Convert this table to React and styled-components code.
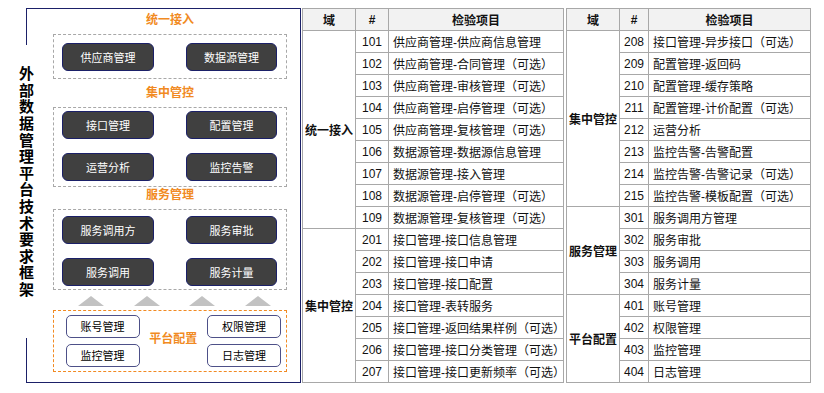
import React from "react";
import styled, { createGlobalStyle } from "styled-components";

const NAVY = "#1b2068";
const ORANGE = "#f18a22";

const GlobalStyle = createGlobalStyle`
  body {
    margin: 0;
    background: #fff;
    font-family: "Liberation Sans", "Noto Sans CJK SC", sans-serif;
    color: #111;
  }
`;

const Page = styled.div`
  display: flex;
  align-items: flex-start;
  padding: 8px 0 0 18px;
`;

const Diagram = styled.div`
  display: flex;
  width: 283px;
  height: 375px;
  flex-shrink: 0;
`;

const Rail = styled.div`
  width: 16px;
  display: flex;
  flex-direction: column;
`;

const RailTop = styled.div`
  margin-left: 8px;
  height: 36px;
  border-left: 1.5px solid ${NAVY};
  border-top: 1.5px solid ${NAVY};
`;

const RailBottom = styled.div`
  margin-top: auto;
  margin-left: 8px;
  height: 44px;
  border-left: 1.5px solid ${NAVY};
  border-bottom: 1.5px solid ${NAVY};
`;

const RailText = styled.div`
  margin-top: 21px;
  writing-mode: vertical-rl;
  font-family: "Noto Sans CJK SC", sans-serif;
  font-size: 15px;
  font-weight: 700;
  line-height: 16px;
  letter-spacing: 1.6px;
  color: #000;
`;

const Board = styled.div`
  flex: 1;
  display: flex;
  flex-direction: column;
  border: 1.5px solid ${NAVY};
  border-left: none;
  padding: 0 13px 0 19px;
`;

const SectionTitle = styled.div`
  text-align: center;
  color: ${ORANGE};
  font-family: "Noto Sans CJK SC", sans-serif;
  font-size: 12px;
  font-weight: 700;
  line-height: 16px;
  margin: ${(p) => p.$top || 0}px 0 7px;
`;

const DashBox = styled.div`
  border: 1px dashed #a8a8a8;
  display: grid;
  grid-template-columns: 92px 91px;
  justify-content: space-between;
  row-gap: 14px;
  padding: ${(p) => p.$pad};
`;

const DarkButton = styled.div`
  height: 28px;
  box-sizing: border-box;
  display: flex;
  align-items: center;
  justify-content: center;
  background: #404040;
  border: 1.5px solid ${NAVY};
  border-radius: 6px;
  color: #fff;
  font-family: "Noto Sans CJK SC", sans-serif;
  font-size: 11px;
`;

const Arrows = styled.div`
  display: flex;
  justify-content: space-between;
  padding: 0 16px 0 25px;
  margin-top: 6px;
`;

const Arrow = styled.div`
  width: 0;
  height: 0;
  border-left: 13.5px solid transparent;
  border-right: 13.5px solid transparent;
  border-bottom: 10px solid #c2c2c2;
`;

const ConfigBox = styled.div`
  margin-top: 4px;
  border: 1.5px dashed ${ORANGE};
  display: grid;
  grid-template-columns: 74px 1fr 74px;
  grid-template-rows: 23px 23px;
  row-gap: 6px;
  padding: 3.5px 5px 4px 11.5px;
`;

const ConfigTitle = styled.div`
  grid-column: 2;
  grid-row: 1 / span 2;
  align-self: center;
  text-align: center;
  margin-top: -6px;
  color: ${ORANGE};
  font-family: "Noto Sans CJK SC", sans-serif;
  font-size: 12px;
  font-weight: 700;
`;

const LightButton = styled.div`
  grid-column: ${(p) => p.$col};
  box-sizing: border-box;
  display: flex;
  align-items: center;
  justify-content: center;
  background: #fff;
  border: 1.5px solid #4d5088;
  border-radius: 5px;
  font-family: "Noto Sans CJK SC", sans-serif;
  font-size: 11px;
  color: #000;
`;

const Tables = styled.div`
  display: flex;
  gap: 2px;
  margin-left: 1px;
`;

const Table = styled.table`
  border-collapse: collapse;
  table-layout: fixed;
  width: ${(p) => p.$width}px;
  font-size: 12px;

  th,
  td {
    border: 1px solid #a8a8a8;
    padding: 0;
    white-space: nowrap;
    overflow: visible;
  }

  tr {
    height: 22px;
  }

  th {
    background: #f2f2f2;
    font-weight: 700;
    text-align: center;
  }
`;

const DomainCell = styled.td`
  text-align: center;
  font-weight: 700;
`;

const NumCell = styled.td`
  text-align: center;
`;

const ItemCell = styled.td`
  padding: 0 0 0 4px !important;
`;

const leftData = [
  {
    domain: "统一接入",
    rows: [
      ["101", "供应商管理-供应商信息管理"],
      ["102", "供应商管理-合同管理（可选）"],
      ["103", "供应商管理-审核管理（可选）"],
      ["104", "供应商管理-启停管理（可选）"],
      ["105", "供应商管理-复核管理（可选）"],
      ["106", "数据源管理-数据源信息管理"],
      ["107", "数据源管理-接入管理"],
      ["108", "数据源管理-启停管理（可选）"],
      ["109", "数据源管理-复核管理（可选）"],
    ],
  },
  {
    domain: "集中管控",
    rows: [
      ["201", "接口管理-接口信息管理"],
      ["202", "接口管理-接口申请"],
      ["203", "接口管理-接口配置"],
      ["204", "接口管理-表转服务"],
      ["205", "接口管理-返回结果样例（可选）"],
      ["206", "接口管理-接口分类管理（可选）"],
      ["207", "接口管理-接口更新频率（可选）"],
    ],
  },
];

const rightData = [
  {
    domain: "集中管控",
    rows: [
      ["208", "接口管理-异步接口（可选）"],
      ["209", "配置管理-返回码"],
      ["210", "配置管理-缓存策略"],
      ["211", "配置管理-计价配置（可选）"],
      ["212", "运营分析"],
      ["213", "监控告警-告警配置"],
      ["214", "监控告警-告警记录（可选）"],
      ["215", "监控告警-模板配置（可选）"],
    ],
  },
  {
    domain: "服务管理",
    rows: [
      ["301", "服务调用方管理"],
      ["302", "服务审批"],
      ["303", "服务调用"],
      ["304", "服务计量"],
    ],
  },
  {
    domain: "平台配置",
    rows: [
      ["401", "账号管理"],
      ["402", "权限管理"],
      ["403", "监控管理"],
      ["404", "日志管理"],
    ],
  },
];

const CheckTable = ({ data, width, cols }) => (
  <Table $width={width}>
    <colgroup>
      {cols.map((w, i) => (
        <col key={i} style={{ width: w }} />
      ))}
    </colgroup>
    <thead>
      <tr>
        <th>域</th>
        <th>#</th>
        <th>检验项目</th>
      </tr>
    </thead>
    <tbody>
      {data.map((group) =>
        group.rows.map(([num, item], i) => (
          <tr key={num}>
            {i === 0 && <DomainCell rowSpan={group.rows.length}>{group.domain}</DomainCell>}
            <NumCell>{num}</NumCell>
            <ItemCell>{item}</ItemCell>
          </tr>
        ))
      )}
    </tbody>
  </Table>
);

const App = () => {
  return (
    <>
      <GlobalStyle />
      <Page>
        <Diagram>
          <Rail>
            <RailTop />
            <RailText>外部数据管理平台技术要求框架</RailText>
            <RailBottom />
          </Rail>
          <Board>
            <SectionTitle $top={2}>统一接入</SectionTitle>
            <DashBox $pad="8px 9px 7px 8px">
              <DarkButton>供应商管理</DarkButton>
              <DarkButton>数据源管理</DarkButton>
            </DashBox>
            <SectionTitle $top={5}>集中管控</SectionTitle>
            <DashBox $pad="3px 9px 5px 8px">
              <DarkButton>接口管理</DarkButton>
              <DarkButton>配置管理</DarkButton>
              <DarkButton>运营分析</DarkButton>
              <DarkButton>监控告警</DarkButton>
            </DashBox>
            <SectionTitle $top={-1}>服务管理</SectionTitle>
            <DashBox $pad="6px 9px 3px 8px">
              <DarkButton>服务调用方</DarkButton>
              <DarkButton>服务审批</DarkButton>
              <DarkButton>服务调用</DarkButton>
              <DarkButton>服务计量</DarkButton>
            </DashBox>
            <Arrows>
              <Arrow />
              <Arrow />
              <Arrow />
              <Arrow />
            </Arrows>
            <ConfigBox>
              <LightButton $col={1}>账号管理</LightButton>
              <ConfigTitle>平台配置</ConfigTitle>
              <LightButton $col={3}>权限管理</LightButton>
              <LightButton $col={1}>监控管理</LightButton>
              <LightButton $col={3}>日志管理</LightButton>
            </ConfigBox>
          </Board>
        </Diagram>
        <Tables>
          <CheckTable data={leftData} width={261} cols={[53, 33, 175]} />
          <CheckTable data={rightData} width={244} cols={[53, 29, 162]} />
        </Tables>
      </Page>
    </>
  );
};

export default App;
